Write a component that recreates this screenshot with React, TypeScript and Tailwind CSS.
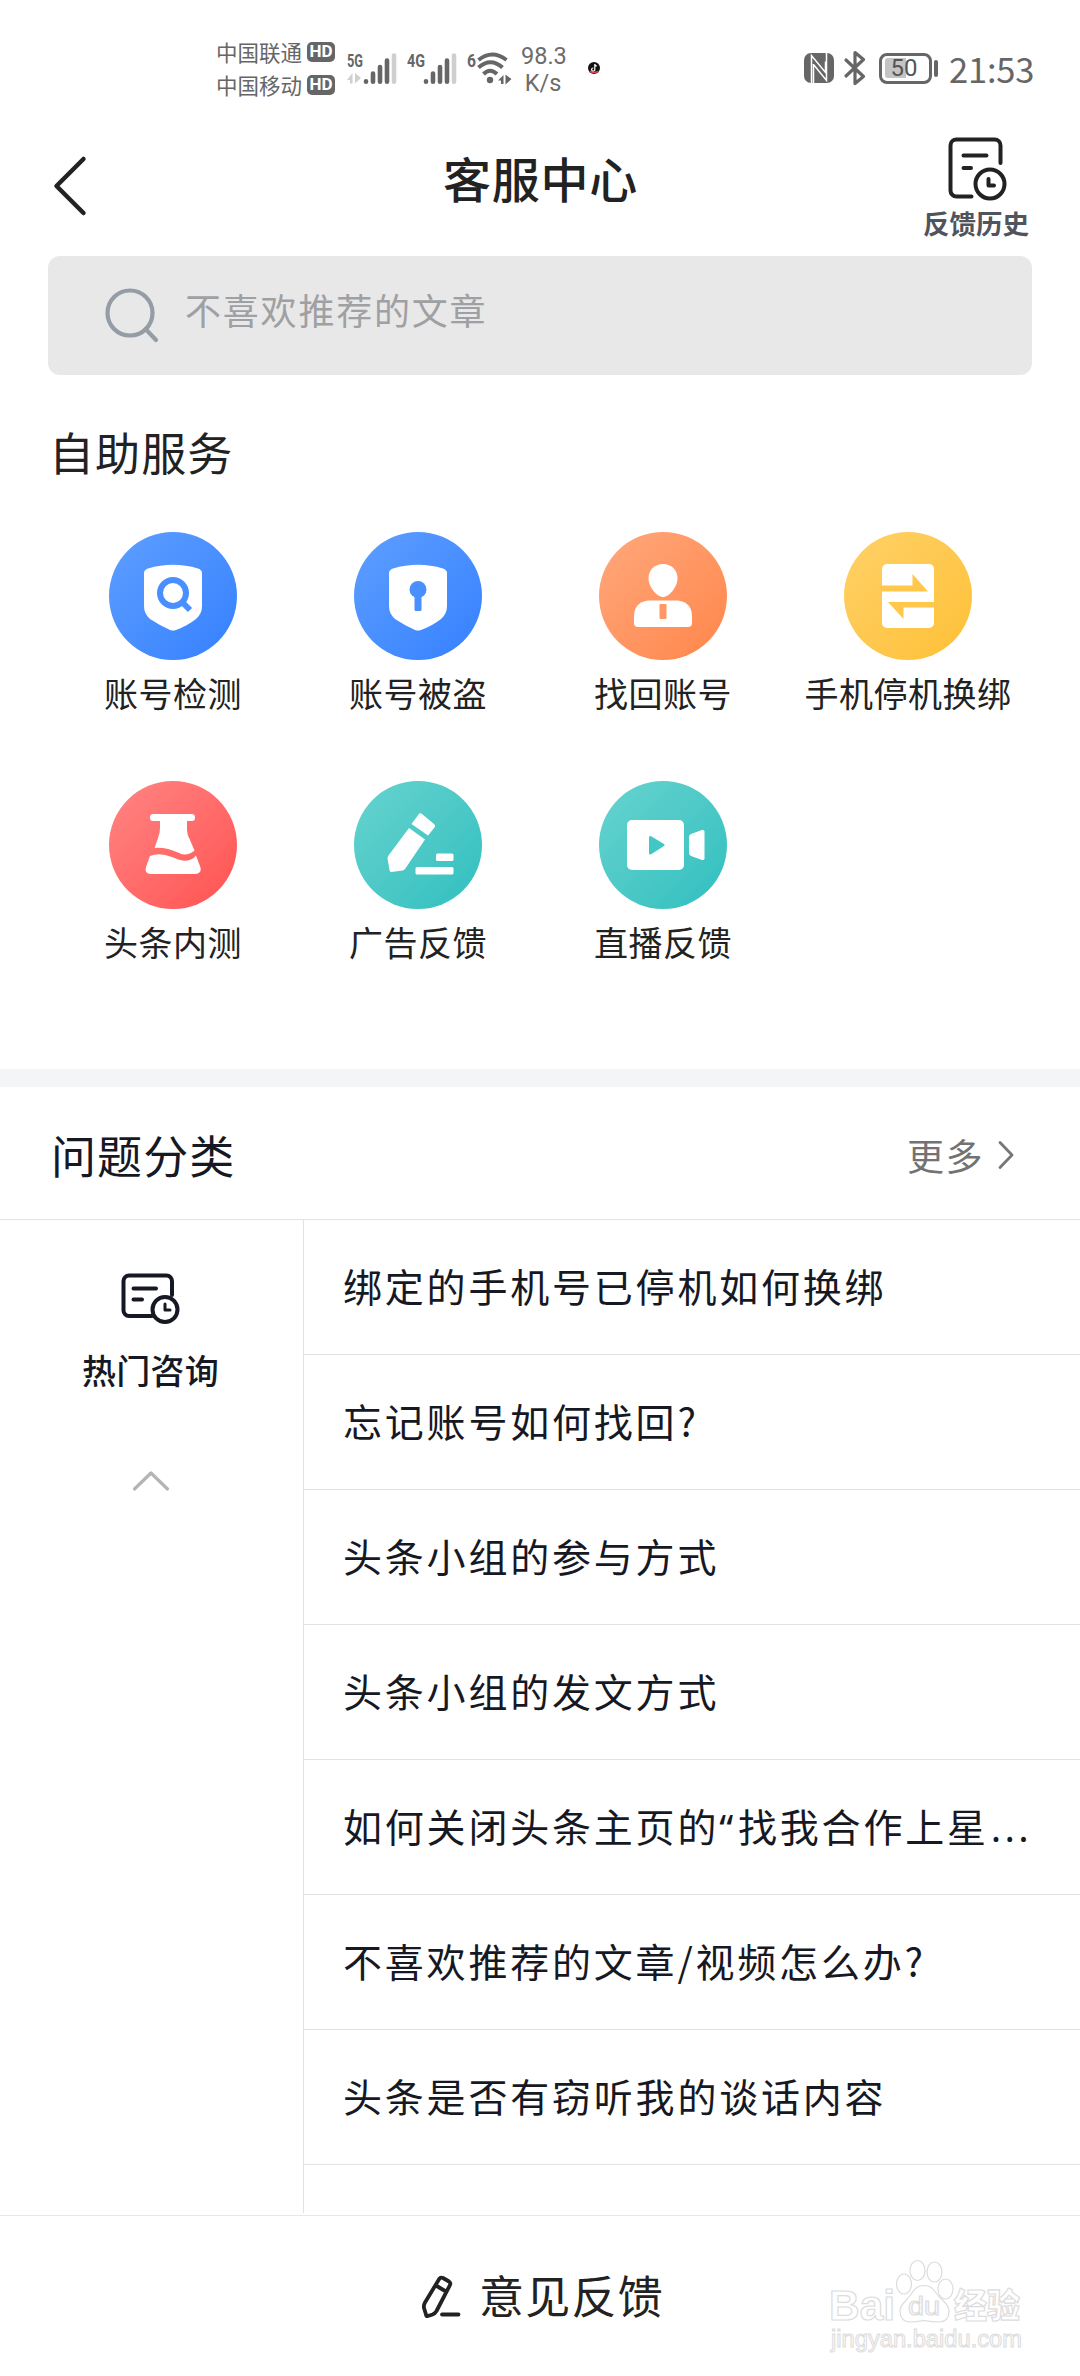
import React from "react";

const FONT = "font-['Noto_Sans_CJK_SC',sans-serif]";

function Signal({ label, arrows }: { label: string; arrows?: boolean }) {
  return (
    <svg className="block h-[36px] w-[52px]" viewBox="0 0 52 36">
      <text x="0" y="18" fontFamily="Roboto" fontWeight="700" fontSize="19" fill="#666" textLength={arrows ? 16 : 18} lengthAdjust="spacingAndGlyphs">
        {label}
      </text>
      {arrows && <path d="M5.500 24v10.500H3V31H0zM8 24v10.500l6-5.500z" fill="#cfcfcf" />}
      <g strokeWidth="4.600" strokeLinecap="round" stroke="#666">
        <path d="M19 32.300v0.500M26 24.500v8.300M33 18v14.800M40 11.500v21.300" />
        <path d="M47 6.500v26.300" stroke="#cfcfcf" />
      </g>
    </svg>
  );
}

function Carrier({ name }: { name: string }) {
  return (
    <div className="flex h-[33px] items-center gap-[5px]">
      <span className="text-[21.500px] leading-[33px]">{name}</span>
      <span className="flex h-[20px] w-[28px] items-center justify-center rounded-[5px] bg-[#666] font-['Roboto'] text-[17px] leading-none font-bold text-white">
        HD
      </span>
    </div>
  );
}

function StatusBar() {
  return (
    <div className="flex h-[136px] items-start pt-[35px] pr-[46px] pl-[216px] text-[#666]">
      <div className="w-[131px]">
        <Carrier name="中国联通" />
        <Carrier name="中国移动" />
      </div>
      <div className="mt-[14px] flex">
        <div className="w-[60px]">
          <Signal label="5G" arrows />
        </div>
        <div className="w-[60px]">
          <Signal label="4G" />
        </div>
        <svg className="block h-[36px] w-[46px]" viewBox="0 0 46 36" fill="none" stroke="#666" strokeWidth="4">
          <text x="0" y="18" fontFamily="Roboto" fontWeight="700" fontSize="19" fill="#666" stroke="none" textLength="9" lengthAdjust="spacingAndGlyphs">
            6
          </text>
          <path d="M11.500 11Q25 0 39.500 11M11.500 18.500Q23.500 8 35.500 18.500M16.500 25Q23 18.500 30 25" />
          <circle cx="23" cy="31" r="3.200" fill="#666" stroke="none" />
          <path d="M31 31.500l5.500-5.500v9h-2.500v-3.500zM38.500 25.500v10l6-5.500z" fill="#666" stroke="none" />
        </svg>
      </div>
      <div className="mt-[8px] ml-[8px] w-[44px] text-center font-['Roboto'] text-[23.500px] leading-[27px] text-[#6c6c6c]">
        <div>98.3</div>
        <div>K/s</div>
      </div>
      <svg className="mt-[26px] ml-[22px] block size-[14px]" viewBox="0 0 14 14">
        <circle cx="7" cy="7" r="6" fill="#111" />
        <path d="M7.800 3v5.500a1.600 1.600 0 1 1-1.500-1.500M7.800 3.300q.5 1.600 2 1.600" stroke="#fff" strokeWidth="1.200" fill="none" />
        <path d="M3 10.500Q7 12.500 11 10.500" stroke="#e44" strokeWidth="1.500" fill="none" />
      </svg>
      <div className="mt-[15px] ml-auto flex items-center">
        <svg className="block h-[36px] w-[66px]" viewBox="0 0 66 36" fill="none">
          <rect x="1" y="3" width="30" height="30" rx="7" fill="#666" />
          <path d="M8.500 33V5.500L22.500 22.500V11.500M10.500 14.500L23.500 30.500V3M10.500 14v19" stroke="#fff" strokeWidth="1.500" />
          <path d="M43 10L60.500 26.500L52 33.500V2.500L60.500 9.500L43 26" stroke="#666" strokeWidth="3.200" strokeLinejoin="round" strokeLinecap="round" />
        </svg>
        <div className="ml-[10px] flex h-[31px] w-[53px] items-center rounded-[8px] border-[3px] border-[#666] p-[2.500px]">
          <div className="relative h-[20px] w-[21px] rounded-l-[3px] bg-[#c4c4c4]">
            <span className="absolute top-0 left-[6px] font-['Roboto'] text-[24px] leading-[20px] text-[#555]">50</span>
          </div>
        </div>
        <div className="ml-[2px] h-[17px] w-[4px] rounded-[2px] bg-[#666]" />
        <span className="ml-[11px] w-[85px] text-[34.500px] leading-[36px] tracking-[-0.200px]">21:53</span>
      </div>
    </div>
  );
}

function Header() {
  return (
    <header className="flex h-[120px] items-start justify-between pr-[51px] pl-[48px]">
      <svg className="mt-[17px] mr-[58px] block h-[66px] w-[48px]" viewBox="0 0 48 66" fill="none" stroke="#222" strokeWidth="4.500" strokeLinecap="round" strokeLinejoin="round">
        <path d="M35.500 6L8.500 33L35.500 60" />
      </svg>
      <h1 className="mt-[5px] ml-[4px] text-[48px] leading-[72px] font-medium tracking-[0.800px] text-[#222]">客服中心</h1>
      <div className="flex w-[106px] flex-col items-center">
        <svg className="block h-[66px] w-[60px] translate-x-[2px]" viewBox="0 0 60 66" fill="none" stroke="#222" strokeWidth="4" strokeLinecap="round" strokeLinejoin="round">
          <path d="M23.500 60.500H8.500a6 6 0 0 1-6-6V9.500a6 6 0 0 1 6-6h38a6 6 0 0 1 6 6v17.500M15.500 19.500h23M15.500 32H23" />
          <circle cx="42" cy="48" r="14.500" />
          <path d="M40.500 43v6.500h5.500" />
        </svg>
        <span className="mt-[1px] text-[26.500px] leading-[40px] font-bold whitespace-nowrap text-[#50545c]">反馈历史</span>
      </div>
    </header>
  );
}

const services = [
  {
    name: "账号检测",
    bg: "from-[#5e9eff] to-[#3480ff]",
    icon: (
      <>
        <path d="M35 41q0-3 4-4.500Q64 29 89 36.500q4 1.500 4 4.500V74q0 8-6 13Q78 94 67 98q-3 1-6 0Q50 93 41 87q-6-5-6-13z" fill="#fff" />
        <circle cx="64" cy="61" r="13" fill="none" stroke="#4a8fff" strokeWidth="6" />
        <path d="M73 70l8 8" stroke="#4a8fff" strokeWidth="6" />
      </>
    ),
  },
  {
    name: "账号被盗",
    bg: "from-[#5e9eff] to-[#3480ff]",
    icon: (
      <>
        <path d="M35 41q0-3 4-4.500Q64 29 89 36.500q4 1.500 4 4.500V74q0 8-6 13Q78 94 67 98q-3 1-6 0Q50 93 41 87q-6-5-6-13z" fill="#fff" />
        <circle cx="64" cy="57.500" r="8.500" fill="#4a8fff" />
        <rect x="60.500" y="60" width="7" height="19" rx="1.500" fill="#4a8fff" />
      </>
    ),
  },
  {
    name: "找回账号",
    bg: "from-[#ffa87c] to-[#ff8548]",
    icon: (
      <>
        <path d="M64 32c9 0 14.500 6.500 14.500 14.500C78.500 55 70 65 64 65S49.500 55 49.500 46.500C49.500 38.500 55 32 64 32z" fill="#fff" />
        <path d="M49 68.500h30q14 2 14 16V91q0 4-4 4H39q-4 0-4-4v-6.500q0-14 14-16z" fill="#fff" />
        <rect x="60.500" y="72" width="7" height="15" rx="1" fill="#ff9862" />
      </>
    ),
  },
  {
    name: "手机停机换绑",
    bg: "from-[#ffd166] to-[#fec033]",
    icon: (
      <>
        <rect x="38" y="32" width="52" height="64" rx="5" fill="#fff" />
        <path d="M37 53.500h31.500V42L84 59.500H37zM91 70H44L59.500 87V75.500H91z" fill="#ffc84c" />
      </>
    ),
  },
  {
    name: "头条内测",
    bg: "from-[#ff8585] to-[#ff5050]",
    icon: (
      <>
        <path d="M44 33h39q3 0 3 3.500T83 40h-5v9q0 5 3 10l4.500 10.500Q78 76 70 72Q57 66 45.500 67L49 57q2-5 2-10v-7h-7q-3 0-3-3.500t3-3.500z" fill="#fff" />
        <path d="M41 75q9-4 22 1q17 8 24-1.500l4.500 12Q93 93 86 93H42q-7 0-5-7z" fill="#fff" />
      </>
    ),
  },
  {
    name: "广告反馈",
    bg: "from-[#66d3cf] to-[#2cbfbf]",
    icon: (
      <>
        <path d="M64.500 33.500q1.500-2 3.500-.5l12 10q2 1.500.5 3.500L74 54.500L57.500 43zM55 47l16 11.500L51 88q-1 1.200-2.500 1.400L37.500 91q-2 0-2-2L33.500 77.500q0-1.500.8-2.800z" fill="#fff" />
        <rect x="82" y="72.500" width="17.500" height="7.500" rx="1.500" fill="#fff" />
        <rect x="61.500" y="86" width="38" height="7.500" rx="1.500" fill="#fff" />
      </>
    ),
  },
  {
    name: "直播反馈",
    bg: "from-[#66d3cf] to-[#2cbfbf]",
    icon: (
      <>
        <rect x="28" y="39" width="57" height="50" rx="5" fill="#fff" />
        <path d="M50 57q0-3 2.500-1.500L65 63q1.500 1 0 2L52.500 73Q50 74.500 50 71.500z" fill="#43c7c5" />
        <path d="M90 56q0-2 2-3l11-4q2.500-.5 2.500 1.500v27q0 2-2.500 1.500L92 75q-2-1-2-3z" fill="#fff" />
      </>
    ),
  },
];

const questions: { id: number; text: React.ReactNode }[] = [
  { id: 1, text: "绑定的手机号已停机如何换绑" },
  { id: 2, text: "忘记账号如何找回?" },
  { id: 3, text: "头条小组的参与方式" },
  { id: 4, text: "头条小组的发文方式" },
  {
    id: 5,
    text: (
      <>
        如何关闭头条主页的<span className="pr-[2px] font-['Noto_Sans']">“</span>找我合作上星
        <span className="pl-[2px] font-['Noto_Sans'] tracking-[3.200px]">...</span>
      </>
    ),
  },
  { id: 6, text: "不喜欢推荐的文章/视频怎么办?" },
  { id: 7, text: "头条是否有窃听我的谈话内容" },
];

function Watermark() {
  return (
    <svg className="absolute right-[44px] bottom-[14px] block h-[104px] w-[208px] overflow-visible" viewBox="0 0 208 104" fill="#fff" stroke="#dcdcdc" strokeWidth="1.200">
      <text x="1" y="62" fontFamily="Liberation Sans" fontWeight="700" fontSize="43" textLength="66" lengthAdjust="spacingAndGlyphs">
        Bai
      </text>
      <ellipse cx="76" cy="26" rx="7.500" ry="10" />
      <ellipse cx="89.500" cy="12.500" rx="7.500" ry="10" />
      <ellipse cx="106.500" cy="14" rx="7.500" ry="10" />
      <ellipse cx="117.500" cy="31" rx="7.500" ry="10" />
      <path d="M96 27.500q7 0 11 6t9 10q5 5 5 10q0 10-10 10.500q-7 0-15-1.500q-8 1.500-14 1.500q-9.500-.5-10-10.500q0-5 5-10q4-4 8-10t11-6z" />
      <text x="80" y="56.500" fontFamily="Liberation Sans" fontSize="26" textLength="32" lengthAdjust="spacingAndGlyphs">
        du
      </text>
      <text x="126" y="60" fontFamily="Liberation Sans, Noto Sans CJK SC" fontWeight="900" fontSize="34" textLength="66" lengthAdjust="spacingAndGlyphs">
        经验
      </text>
      <text x="3" y="89" fontFamily="Liberation Sans" fontSize="23" strokeWidth="1" textLength="191" lengthAdjust="spacingAndGlyphs">
        jingyan.baidu.com
      </text>
    </svg>
  );
}

export default function App() {
  return (
    <div className={`relative flex h-[2376px] w-[1080px] flex-col overflow-hidden bg-white ${FONT}`}>
      <StatusBar />
      <Header />

      <div className="mx-[48px] flex h-[119px] shrink-0 items-center rounded-[12px] bg-[#e8e8e8] pl-[54px]">
        <svg className="block size-[60px]" viewBox="0 0 60 60" fill="none" stroke="#949ca6" strokeWidth="4.200" strokeLinecap="round">
          <circle cx="28" cy="27" r="22.500" />
          <path d="M43.500 43L54 54" />
        </svg>
        <span className="-mt-[13px] ml-[23px] text-[36px] leading-[52px] tracking-[1.800px] text-[#9fa0a3]">不喜欢推荐的文章</span>
      </div>

      <section className="h-[694px] shrink-0 pt-[44px]">
        <h2 className="pl-[49px] text-[45px] leading-[66px] tracking-[1.100px] text-[#222]">自助服务</h2>
        <div className="mt-[47px] grid grid-cols-4 px-[50px]">
          {services.map((s) => (
            <div key={s.name} className="flex h-[249px] flex-col items-center">
              <div className={`size-[128px] rounded-full bg-linear-to-br ${s.bg}`}>
                <svg className="block size-[128px]" viewBox="0 0 128 128">
                  {s.icon}
                </svg>
              </div>
              <span className="mt-[8px] pl-[1px] text-[34px] leading-[50px] tracking-[0.500px] whitespace-nowrap text-[#222]">{s.name}</span>
            </div>
          ))}
        </div>
      </section>

      <div className="h-[18px] shrink-0 bg-[#f4f5f7]" />

      <div className="flex h-[133px] shrink-0 items-center justify-between border-b border-[#e2e2e4] pr-[61px] pl-[51px]">
        <h2 className="mt-[3px] text-[45px] leading-[66px] tracking-[1.100px] text-[#161823]">问题分类</h2>
        <div className="mt-[4px] flex items-center text-[#737373]">
          <span className="text-[37px] leading-[54px] tracking-[1.500px]">更多</span>
          <svg className="ml-[13px] block h-[32px] w-[22px]" viewBox="0 0 22 32" fill="none" stroke="#777" strokeWidth="2.800" strokeLinecap="round" strokeLinejoin="round">
            <path d="M3 3.500L15 16L3 28.500" />
          </svg>
        </div>
      </div>

      <div className="flex h-[993px] shrink-0 overflow-hidden">
        <aside className="flex w-[304px] flex-col items-center border-r border-[#e2e2e4] pt-[50px] pr-[2px]">
          <svg className="block h-[56px] w-[60px]" viewBox="0 0 60 56" fill="none" stroke="#161823" strokeWidth="4" strokeLinecap="round" strokeLinejoin="round">
            <path d="M31 46H8a5.500 5.500 0 0 1-5.500-5.500V11A5.500 5.500 0 0 1 8 5.500h37.500A5.500 5.500 0 0 1 51 11v14M12.500 18.500H35M12.500 29.500h8.500" />
            <circle cx="44" cy="39.500" r="12.500" />
            <path d="M44 34v6h5" strokeWidth="3" />
          </svg>
          <span className="mt-[19px] text-[34px] leading-[50px] font-medium tracking-[0.300px] text-[#161823]">热门咨询</span>
          <svg className="mt-[73px] block h-[26px] w-[40px]" viewBox="0 0 40 26" fill="none" stroke="#b4b4b4" strokeWidth="3.200" strokeLinecap="round" strokeLinejoin="round">
            <path d="M3.500 21L20 5L36.500 21" />
          </svg>
        </aside>
        <ul className="flex-1">
          {questions.map((q) => (
            <li key={q.id} className="h-[135px] border-b border-[#e2e2e4] pt-[35px] pl-[39px] text-[39px] leading-[60px] tracking-[2.800px] whitespace-nowrap text-[#161823]">
              {q.text}
            </li>
          ))}
        </ul>
      </div>

      <footer className="mt-[2px] flex flex-1 items-center justify-center border-t border-[#e8e8e8] pl-[4px]">
        <svg className="mt-[2px] block h-[46px] w-[44px]" viewBox="0 0 44 46" fill="none" stroke="#222" strokeWidth="3.800" strokeLinecap="round" strokeLinejoin="round">
          <path d="M19.500 4.500q1.500-1.500 3.500-.5l6 3.500q2 1.500 1 3.500L16.500 37q-1.500 2.500-4 3.500l-4.500 1.500q-2 .5-2-1.500L4 34q-.5-3 1-5.500zM16 11.500l10 6M22 40.500h16.500" />
        </svg>
        <span className="-mt-[2px] ml-[15px] text-[45px] leading-[66px] tracking-[1.300px] text-[#222]">意见反馈</span>
      </footer>
      <Watermark />
    </div>
  );
}
